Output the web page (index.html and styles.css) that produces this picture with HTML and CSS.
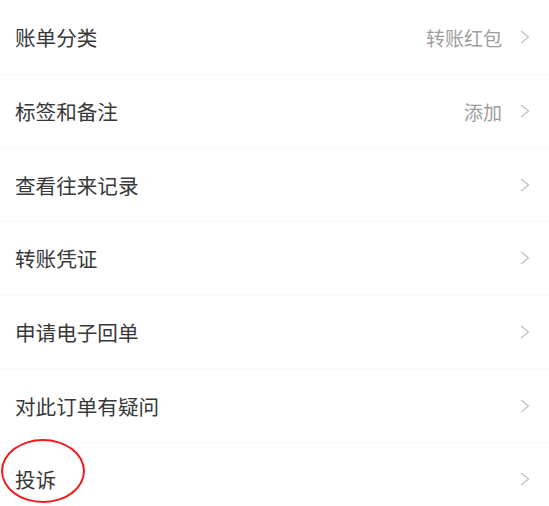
FILE: index.html
```html
<!DOCTYPE html>
<html lang="zh-CN">
<head>
    <meta charset="UTF-8">
    <meta name="viewport" content="width=device-width, initial-scale=1.0">
    <title>账单详情</title>
    <link rel="stylesheet" href="styles.css">
</head>
<body>
    <ul class="menu">
        <li class="row">
            <span class="label">账单分类</span>
            <span class="value">转账红包</span>
            <svg class="arrow" viewBox="0 0 10 14"><polyline points="1,1 8.5,7 1,13"/></svg>
        </li>
        <li class="row">
            <span class="label">标签和备注</span>
            <span class="value">添加</span>
            <svg class="arrow" viewBox="0 0 10 14"><polyline points="1,1 8.5,7 1,13"/></svg>
        </li>
        <li class="row">
            <span class="label">查看往来记录</span>
            <svg class="arrow" viewBox="0 0 10 14"><polyline points="1,1 8.5,7 1,13"/></svg>
        </li>
        <li class="row">
            <span class="label">转账凭证</span>
            <svg class="arrow" viewBox="0 0 10 14"><polyline points="1,1 8.5,7 1,13"/></svg>
        </li>
        <li class="row">
            <span class="label">申请电子回单</span>
            <svg class="arrow" viewBox="0 0 10 14"><polyline points="1,1 8.5,7 1,13"/></svg>
        </li>
        <li class="row">
            <span class="label">对此订单有疑问</span>
            <svg class="arrow" viewBox="0 0 10 14"><polyline points="1,1 8.5,7 1,13"/></svg>
        </li>
        <li class="row">
            <span class="label"><span class="circled">投诉</span></span>
            <svg class="arrow" viewBox="0 0 10 14"><polyline points="1,1 8.5,7 1,13"/></svg>
        </li>
    </ul>
</body>
</html>
```

FILE: styles.css
```css
body {
    margin: 0;
    background: #fff;
    font-family: "Noto Sans CJK SC", "Noto Sans", sans-serif;
    overflow: hidden;
}
.menu {
    list-style: none;
    margin: 0;
    padding: 1px 0 0;
}
.row {
    display: flex;
    align-items: center;
    height: 73.7px;
    padding: 0 19px 0 15px;
    border-bottom: 1px solid #fafafa;
    box-sizing: border-box;
}
.label {
    flex: 1;
    font-size: 20.6px;
    line-height: 30px;
    color: #383838;
}
.value {
    font-size: 19px;
    color: #9d9d9d;
    margin-right: 18px;
}
.arrow {
    width: 10px;
    height: 14px;
    fill: none;
    stroke: #c2c2c2;
    stroke-width: 1.3;
}
.circled {
    position: relative;
    display: inline-block;
}
.circled::before {
    content: "";
    position: absolute;
    left: -14px;
    top: -25px;
    width: 84px;
    height: 64px;
    border: 2.5px solid #ee1c1c;
    border-radius: 50%;
    box-sizing: border-box;
}
```
